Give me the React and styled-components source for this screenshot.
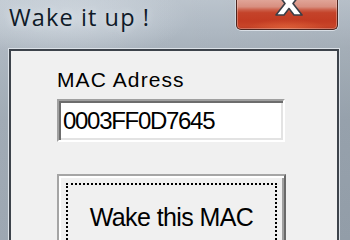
import React from "react";
import styled, { createGlobalStyle } from "styled-components";

const GlobalStyle = createGlobalStyle`
  html, body { margin: 0; padding: 0; }
  body { width: 350px; height: 240px; overflow: hidden; background: #a3adb7; }
`;

const Window = styled.div`
  width: 350px;
  height: 240px;
  overflow: hidden;
  display: flex;
  flex-direction: column;
  background:
    radial-gradient(ellipse 120px 40px at 70px 18px, rgba(214, 221, 228, 0.75), rgba(214, 221, 228, 0) 100%),
    linear-gradient(90deg, rgba(255,255,255,0.06) 0%, rgba(255,255,255,0) 40%, rgba(0,0,0,0.03) 100%),
    linear-gradient(180deg, #bcc5ce 0px, #b2bcc6 25px, #a9b3bd 48px, #9ba6b1 120px, #97a2ad 240px);
`;

const TitleBar = styled.div`
  height: 49px;
  flex-shrink: 0;
  display: flex;
  align-items: flex-start;
  padding: 0 12px 0 9px;
  box-sizing: border-box;
`;

const Title = styled.div`
  margin-top: 6px;
  font-family: "Open Sans", "Liberation Sans", sans-serif;
  font-size: 23.5px;
  font-weight: 500;
  line-height: 1;
  letter-spacing: 1.1px;
  color: #0f1a28;
  text-shadow: 0 0 8px rgba(232, 238, 244, 0.9);
  white-space: nowrap;
`;

const CloseButton = styled.div`
  margin-left: auto;
  margin-top: -8px;
  width: 102px;
  height: 38px;
  box-sizing: border-box;
  border: 1px solid #4d241e;
  border-top: none;
  border-radius: 0 0 5px 5px;
  display: flex;
  align-items: center;
  justify-content: center;
  padding: 0 0 14px 4px;
  background:
    radial-gradient(ellipse 40px 10px at 50% 100%, rgba(240, 120, 70, 0.55), rgba(240, 120, 70, 0) 100%),
    linear-gradient(180deg, #ecbcb2 0%, #e0a497 22%, #d88f80 40%, #cc604a 48%, #c4432a 56%, #c23b22 78%, #c84428 92%, #b63a24 100%);
  box-shadow:
    inset 0 0 0 1px rgba(255, 220, 210, 0.35),
    0 1px 0 rgba(235, 240, 245, 0.7),
    1px 0 0 rgba(235, 240, 245, 0.5),
    -1px 0 0 rgba(235, 240, 245, 0.5);
`;

const Client = styled.div`
  flex: 1;
  margin: 0 11px 0 9px;
  border: 2px solid #3d434b;
  border-bottom: none;
  background: #f0f0f0;
  box-shadow: 0 0 0 1px #dbe1e7;
  padding-left: 46px;
  display: flex;
  flex-direction: column;
  align-items: flex-start;
`;

const Label = styled.div`
  margin-top: 18px;
  font-family: "Liberation Sans", Arial, sans-serif;
  font-size: 21px;
  line-height: 21px;
  letter-spacing: 1.1px;
  color: #000;
  white-space: nowrap;
`;

const MacInput = styled.input`
  margin-top: 9px;
  width: 228px;
  height: 43px;
  box-sizing: border-box;
  border: 2px solid;
  border-color: #a0a0a0 #ffffff #ffffff #a0a0a0;
  box-shadow: inset 2px 2px 0 #6d6d6d, inset -2px -2px 0 #e3e3e3;
  background: #fff;
  padding: 0 0 0 4px;
  font-family: "Liberation Sans", Arial, sans-serif;
  font-size: 24px;
  letter-spacing: -1.3px;
  color: #000;
  outline: none;
`;

const WakeButton = styled.button`
  margin-top: 32px;
  width: 229px;
  height: 90px;
  box-sizing: border-box;
  border: 2px solid;
  border-color: #a5a5a5 #696969 #696969 #a5a5a5;
  box-shadow: inset 2px 2px 0 #ffffff, inset -2px -2px 0 #a0a0a0;
  background: #f0f0f0;
  padding: 7px;
  display: flex;
  cursor: default;
`;

const FocusRing = styled.div`
  flex: 1;
  border: 2px dotted #000;
  display: flex;
  justify-content: center;
  align-items: flex-start;
  padding-top: 20px;
  font-family: "Liberation Sans", Arial, sans-serif;
  font-size: 25px;
  line-height: 25px;
  letter-spacing: -0.6px;
  color: #000;
  white-space: nowrap;
`;

const CloseGlyph = () => (
  <svg width="30" height="25" viewBox="0 0 30 25">
    <polygon
      points="2,1 10,1 15,7.5 20,1 28,1 19,12.5 28,24 20,24 15,17.5 10,24 2,24 11,12.5"
      fill="#ffffff"
      stroke="#3a3e47"
      strokeWidth="1.6"
      strokeLinejoin="round"
    />
  </svg>
);

export default function App() {
  return (
    <>
      <GlobalStyle />
      <Window>
        <TitleBar>
          <Title>Wake it up !</Title>
          <CloseButton>
            <CloseGlyph />
          </CloseButton>
        </TitleBar>
        <Client>
          <Label>MAC Adress</Label>
          <MacInput defaultValue="0003FF0D7645" readOnly />
          <WakeButton type="button">
            <FocusRing>Wake this MAC</FocusRing>
          </WakeButton>
        </Client>
      </Window>
    </>
  );
}
